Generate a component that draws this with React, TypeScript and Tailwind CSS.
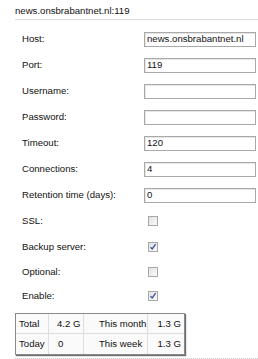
import type React from "react"

const font = { fontFamily: '"Liberation Sans", Arial, sans-serif' }

type Row =
  | { label: string; kind: "text"; value: string }
  | { label: string; kind: "check"; checked: boolean }

const rows: Row[] = [
  { label: "Host:", kind: "text", value: "news.onsbrabantnet.nl" },
  { label: "Port:", kind: "text", value: "119" },
  { label: "Username:", kind: "text", value: "" },
  { label: "Password:", kind: "text", value: "" },
  { label: "Timeout:", kind: "text", value: "120" },
  { label: "Connections:", kind: "text", value: "4" },
  { label: "Retention time (days):", kind: "text", value: "0" },
  { label: "SSL:", kind: "check", checked: false },
  { label: "Backup server:", kind: "check", checked: true },
  { label: "Optional:", kind: "check", checked: false },
  { label: "Enable:", kind: "check", checked: true },
]

const Checkbox: React.FC<{ checked: boolean }> = ({ checked }) => (
  <div className="ml-[4px] w-[10px] h-[10px] border border-[#a8a8a8] bg-gradient-to-br from-[#e2e2e2] to-[#fafafa] flex items-center justify-center">
    {checked && (
      <svg width="8" height="8" viewBox="0 0 8 8">
        <path d="M1.5 4.2 L3.2 6 L6.6 1.2" fill="none" stroke="#3a55a0" strokeWidth="1.3" />
      </svg>
    )}
  </div>
)

export default function App() {
  return (
    <div className="w-[258px] h-[359px] bg-white text-[#111] text-[9.6px] leading-[12px] overflow-hidden" style={font}>
      <div className="ml-[15px] pt-[5px] pb-[2px] border-b border-[#dcdcdc]">news.onsbrabantnet.nl:119</div>

      <div className="mt-[6px] ml-[22px]">
        {rows.map((row, i) => (
          <div key={row.label} className={`flex items-center ${i >= 9 ? "h-[24px]" : "h-[26px]"}`}>
            <div className="w-[122px]">{row.label}</div>
            {row.kind === "text" ? (
              <div className="w-[112px] h-[15px] border border-[#a9a9a9] shadow-[inset_1px_1px_0_#e6e6e6] px-[2px] flex items-center">
                {row.value}
              </div>
            ) : (
              <Checkbox checked={row.checked} />
            )}
          </div>
        ))}
      </div>

      <div className="mt-[5px] ml-[15px] w-[170px] border border-[#8a8a8a] shadow-[1px_1px_1px_#6f6f6f] bg-[#fafafa]">
        <div className="grid grid-cols-[33px_35px_64px_36px] h-[20px] border-b border-[#dedede]">
          <div className="pl-[3px] flex items-center border-r border-[#dedede]">Total</div>
          <div className="pl-[8px] flex items-center border-r border-[#dedede]">4.2 G</div>
          <div className="pl-[15px] flex items-center border-r border-[#dedede]">This month</div>
          <div className="pr-[3px] flex items-center justify-end">1.3 G</div>
        </div>
        <div className="grid grid-cols-[33px_35px_64px_36px] h-[20px]">
          <div className="pl-[3px] flex items-center border-r border-[#dedede]">Today</div>
          <div className="pl-[9px] flex items-center border-r border-[#dedede]">0</div>
          <div className="pl-[15px] flex items-center border-r border-[#dedede]">This week</div>
          <div className="pr-[3px] flex items-center justify-end">1.3 G</div>
        </div>
      </div>

      <div className="mt-[3px] ml-[15px] border-t border-dotted border-[#c8c8c8]" />
    </div>
  )
}
